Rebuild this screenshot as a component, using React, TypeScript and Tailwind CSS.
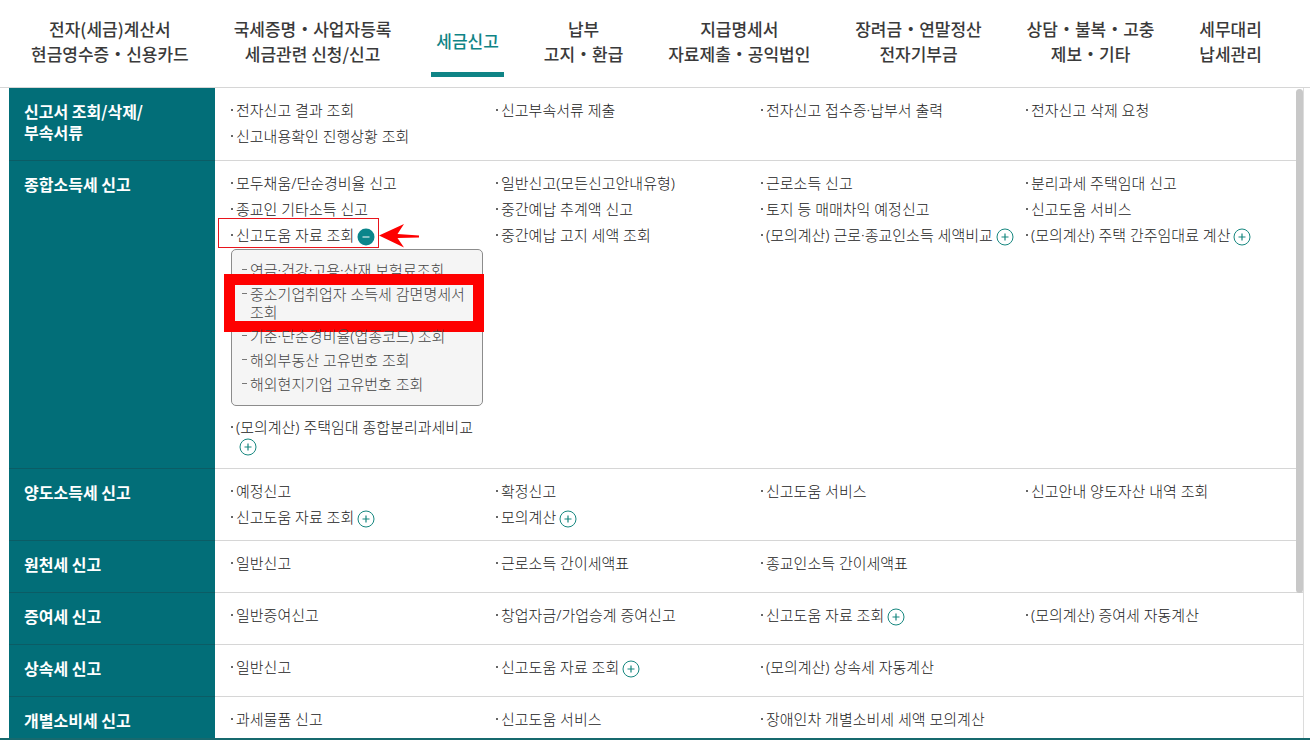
import { ReactNode } from "react";

type MenuItem = {
  label: string;
  more?: boolean;
  children?: string[];
};

type Section = {
  title: string[];
  columns: MenuItem[][];
};

const tabs: { lines: string[]; active?: boolean }[] = [
  { lines: ["전자(세금)계산서", "현금영수증・신용카드"] },
  { lines: ["국세증명・사업자등록", "세금관련 신청/신고"] },
  { lines: ["세금신고"], active: true },
  { lines: ["납부", "고지・환급"] },
  { lines: ["지급명세서", "자료제출・공익법인"] },
  { lines: ["장려금・연말정산", "전자기부금"] },
  { lines: ["상담・불복・고충", "제보・기타"] },
  { lines: ["세무대리", "납세관리"] },
];

const highlighted = "중소기업취업자 소득세 감면명세서 조회";

const sections: Section[] = [
  {
    title: ["신고서 조회/삭제/", "부속서류"],
    columns: [
      [{ label: "전자신고 결과 조회" }, { label: "신고내용확인 진행상황 조회" }],
      [{ label: "신고부속서류 제출" }],
      [{ label: "전자신고 접수증·납부서 출력" }],
      [{ label: "전자신고 삭제 요청" }],
    ],
  },
  {
    title: ["종합소득세 신고"],
    columns: [
      [
        { label: "모두채움/단순경비율 신고" },
        { label: "종교인 기타소득 신고" },
        {
          label: "신고도움 자료 조회",
          children: [
            "연금·건강·고용·산재 보험료조회",
            highlighted,
            "기준·단순경비율(업종코드) 조회",
            "해외부동산 고유번호 조회",
            "해외현지기업 고유번호 조회",
          ],
        },
        { label: "(모의계산) 주택임대 종합분리과세비교", more: true },
      ],
      [
        { label: "일반신고(모든신고안내유형)" },
        { label: "중간예납 추계액 신고" },
        { label: "중간예납 고지 세액 조회" },
      ],
      [
        { label: "근로소득 신고" },
        { label: "토지 등 매매차익 예정신고" },
        { label: "(모의계산) 근로·종교인소득 세액비교", more: true },
      ],
      [
        { label: "분리과세 주택임대 신고" },
        { label: "신고도움 서비스" },
        { label: "(모의계산) 주택 간주임대료 계산", more: true },
      ],
    ],
  },
  {
    title: ["양도소득세 신고"],
    columns: [
      [{ label: "예정신고" }, { label: "신고도움 자료 조회", more: true }],
      [{ label: "확정신고" }, { label: "모의계산", more: true }],
      [{ label: "신고도움 서비스" }],
      [{ label: "신고안내 양도자산 내역 조회" }],
    ],
  },
  {
    title: ["원천세 신고"],
    columns: [
      [{ label: "일반신고" }],
      [{ label: "근로소득 간이세액표" }],
      [{ label: "종교인소득 간이세액표" }],
      [],
    ],
  },
  {
    title: ["증여세 신고"],
    columns: [
      [{ label: "일반증여신고" }],
      [{ label: "창업자금/가업승계 증여신고" }],
      [{ label: "신고도움 자료 조회", more: true }],
      [{ label: "(모의계산) 증여세 자동계산" }],
    ],
  },
  {
    title: ["상속세 신고"],
    columns: [
      [{ label: "일반신고" }],
      [{ label: "신고도움 자료 조회", more: true }],
      [{ label: "(모의계산) 상속세 자동계산" }],
      [],
    ],
  },
  {
    title: ["개별소비세 신고"],
    columns: [
      [{ label: "과세물품 신고" }],
      [{ label: "신고도움 서비스" }],
      [{ label: "장애인차 개별소비세 세액 모의계산" }],
      [],
    ],
  },
];

function ToggleButton({ open, label }: { open?: boolean; label: string }) {
  return (
    <button
      type="button"
      aria-expanded={!!open}
      aria-label={label}
      className="ml-[3px] mt-0.5 -mb-0.5 inline-block size-[18px] align-top"
    >
      <svg viewBox="0 0 18 18" className="block size-full" fill="none" stroke="#16877f">
        {open ? (
          <>
            <circle cx="9" cy="9" r="8.5" fill="#0b858b" stroke="none" />
            <path d="M5.5 9h7" stroke="#fff" />
          </>
        ) : (
          <>
            <circle cx="9" cy="9" r="8" />
            <path d="M5.5 9h7M9 5.5v7" strokeWidth="1.2" />
          </>
        )}
      </svg>
    </button>
  );
}

function Bullet() {
  return <span className="mt-2 mr-[3px] size-0.5 shrink-0 bg-[#666]" />;
}

function ItemLine({ children }: { children: ReactNode }) {
  return (
    <div className="flex py-1">
      <Bullet />
      <div className="min-w-0">{children}</div>
    </div>
  );
}

function SubMenu({ items }: { items: string[] }) {
  return (
    <ul className="mt-px mr-[13px] mb-2 rounded-[5px] border border-[#8c8c8c] bg-[#f5f5f5] px-2.5 pt-2 pb-[9px] text-[#444]">
      {items.map((item) => (
        <li key={item} className="relative flex py-[3px]">
          <span className="mt-2 mr-[3px] h-px w-[5px] shrink-0 bg-[#777]" />
          <a href="#">{item}</a>
          {item === highlighted && (
            <span className="pointer-events-none absolute -top-2 -right-3 -bottom-2 -left-[18px] border-[11px] border-[#fe0000]" />
          )}
        </li>
      ))}
    </ul>
  );
}

function Entry({ item }: { item: MenuItem }) {
  if (item.children) {
    return (
      <li>
        <div className="relative w-fit">
          <ItemLine>
            <a href="#">{item.label}</a>
            <ToggleButton open label={`${item.label} 닫기`} />
          </ItemLine>
          <span className="pointer-events-none absolute -top-1 -right-1 bottom-0 -left-[13px] border border-[#e8141c]" />
          <svg
            viewBox="0 0 40 24"
            className="pointer-events-none absolute top-0.5 left-full ml-1 h-6 w-10"
            fill="#fe0000"
          >
            <path d="M0 11.500 25 0 18.500 10 40 11.500v2L18.500 14 25 23.500z" />
          </svg>
        </div>
        <SubMenu items={item.children} />
      </li>
    );
  }
  return (
    <li className="pr-1.5">
      <ItemLine>
        <a href="#">{item.label}</a>
        {item.more && <ToggleButton label={`${item.label} 펼치기`} />}
      </ItemLine>
    </li>
  );
}

function Header() {
  return (
    <header className="shrink-0 border-b border-[#d6d6d6] pb-2.5">
      <nav className="flex justify-between pr-12 pl-[31px] text-center text-[17px] leading-[25px] font-medium text-[#3a3a3a]">
        {tabs.map((tab) => (
          <a
            key={tab.lines[0]}
            href="#"
            aria-current={tab.active ? "page" : undefined}
            className={
              tab.active
                ? "relative flex h-[77px] flex-col justify-center pt-1 whitespace-nowrap text-[#0f8486]"
                : "flex h-[77px] flex-col justify-center pt-1 whitespace-nowrap"
            }
          >
            {tab.lines.map((line) => (
              <span key={line}>{line}</span>
            ))}
            {tab.active && <span className="absolute -inset-x-[5px] bottom-0 h-[5px] bg-[#0f8486]" />}
          </a>
        ))}
      </nav>
    </header>
  );
}

export default function App() {
  return (
    <div className="flex h-screen flex-col overflow-hidden border-b-2 border-[#17696e] bg-white font-['Noto_Sans_CJK_KR','Noto_Sans',sans-serif]">
      <Header />
      <main className="relative mr-1.5 ml-[9px] min-h-0 flex-1 overflow-hidden border-r border-[#dcdcdc]">
        {sections.map((section) => (
          <section key={section.title[0]} className="flex">
            <h2 className="w-[206px] shrink-0 border-b border-[#0b5c65] bg-[#026e78] pt-[13px] pb-[17px] pl-[15px] text-base leading-[21px] font-bold text-white">
              {section.title.map((line) => (
                <span key={line} className="block">
                  {line}
                </span>
              ))}
            </h2>
            <div className="grid flex-1 grid-cols-4 border-b border-[#d6d6d6] pt-[9px] pr-3 pb-2.5 pl-4 font-['Noto_Sans','Noto_Sans_CJK_KR',sans-serif] text-[15px] leading-[18px] font-light text-[#222]">
              {section.columns.map((column, i) => (
                <ul key={i}>
                  {column.map((item) => (
                    <Entry key={item.label} item={item} />
                  ))}
                </ul>
              ))}
            </div>
          </section>
        ))}
        <span className="absolute top-px right-0 h-[504px] w-[7px] rounded-full bg-[#c8c8c8]" />
      </main>
    </div>
  );
}
